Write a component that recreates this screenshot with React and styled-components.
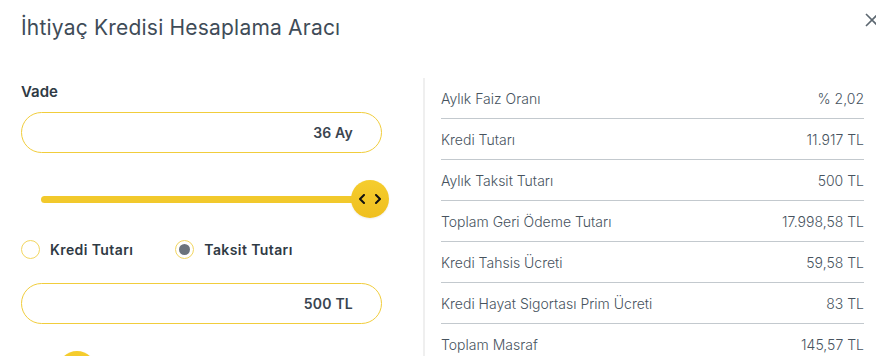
import React, { useState } from 'react';
import styled, { createGlobalStyle } from 'styled-components';

const GlobalStyle = createGlobalStyle`
  body {
    margin: 0;
    background: #fff;
    font-family: Inter, "Open Sans", "Liberation Sans", sans-serif;
  }
`;

const Modal = styled.div`
  width: 876px;
  height: 356px;
  overflow: hidden;
  background: #fff;
`;

const Header = styled.header`
  display: flex;
  justify-content: space-between;
  align-items: flex-start;
  height: 78px;
  padding: 14px 0 0 21px;
  box-sizing: border-box;
`;

const Title = styled.h1`
  margin: 0;
  font-size: 21px;
  font-weight: 400;
  letter-spacing: 0.2px;
  line-height: 28px;
  color: #3f4c58;
`;

const Close = styled.button`
  background: none;
  border: 0;
  padding: 0;
  margin: -2px -4px 0 0;
  width: 16px;
  height: 16px;
  color: #5c6770;
  cursor: pointer;
`;

const Body = styled.div`
  display: grid;
  grid-template-columns: 361px 1fr;
  column-gap: 41px;
  padding: 0 12px 0 21px;
`;

const Form = styled.div`
  display: flex;
  flex-direction: column;
  padding-top: 4px;
`;

const Label = styled.div`
  font-size: 15px;
  font-weight: 600;
  line-height: 20px;
  color: #2f3a44;
  margin-bottom: 10px;
`;

const Field = styled.input`
  height: 41px;
  box-sizing: border-box;
  border: 1px solid #f1cd3c;
  border-radius: 21px;
  padding: 0 28px 0 20px;
  text-align: right;
  font: inherit;
  font-size: 14px;
  font-weight: 600;
  letter-spacing: 0.2px;
  color: #3a4550;
  outline: none;
  background: #fff;
`;

const Slider = styled.div`
  position: relative;
  margin: ${(p) => p.$top}px 12px 0 20px;
  height: 38px;
  display: flex;
  align-items: center;
`;

const Track = styled.div`
  width: 100%;
  height: 7px;
  border-radius: 4px;
  background: #e6e8ea;
  overflow: hidden;
`;

const Fill = styled.div`
  height: 100%;
  background: #f2c92c;
`;

const Thumb = styled.div`
  position: absolute;
  top: 0;
  width: 38px;
  height: 38px;
  margin-left: -19px;
  border-radius: 50%;
  background: linear-gradient(#f5cd2e, #efbf1f);
  display: flex;
  align-items: center;
  justify-content: center;
  box-shadow: 0 1px 2px rgba(0, 0, 0, 0.08);
`;

const RadioGroup = styled.div`
  display: flex;
  gap: 42px;
  margin: 22px 0 24px;
`;

const RadioOption = styled.label`
  display: flex;
  align-items: center;
  gap: 10px;
  font-size: 14px;
  font-weight: 600;
  letter-spacing: 0.4px;
  color: #2f3a44;
  cursor: pointer;
`;

const RadioMark = styled.span`
  width: 19px;
  height: 19px;
  box-sizing: border-box;
  border-radius: 50%;
  border: 1px solid #f2d660;
  display: flex;
  align-items: center;
  justify-content: center;

  &::after {
    content: '';
    width: 11px;
    height: 11px;
    border-radius: 50%;
    background: ${(p) => (p.$checked ? '#6b737c' : 'transparent')};
  }
`;

const Summary = styled.div`
  border-left: 2px solid #efefef;
  padding-left: 16px;
  min-height: 278px;
`;

const Row = styled.div`
  display: flex;
  justify-content: space-between;
  align-items: center;
  height: 41px;
  box-sizing: border-box;
  border-bottom: 1px solid #c3c9ce;
  font-size: 14px;
  font-weight: 300;
  color: #47535e;

  &:last-child {
    border-bottom: 0;
  }
`;

function RangeSlider({ value, top }) {
  return (
    <Slider $top={top}>
      <Track>
        <Fill style={{ width: `${value}%` }} />
      </Track>
      <Thumb style={{ left: `${value}%` }}>
        <svg width="22" height="10" viewBox="0 0 22 10" fill="none" stroke="#111" strokeWidth="2" strokeLinecap="round" strokeLinejoin="round">
          <path d="M5 1 L1 5 L5 9" />
          <path d="M17 1 L21 5 L17 9" />
        </svg>
      </Thumb>
    </Slider>
  );
}

const rows = [
  ['Aylık Faiz Oranı', '% 2,02'],
  ['Kredi Tutarı', '11.917 TL'],
  ['Aylık Taksit Tutarı', '500 TL'],
  ['Toplam Geri Ödeme Tutarı', '17.998,58 TL'],
  ['Kredi Tahsis Ücreti', '59,58 TL'],
  ['Kredi Hayat Sigortası Prim Ücreti', '83 TL'],
  ['Toplam Masraf', '145,57 TL'],
];

export default function App() {
  const [mode, setMode] = useState('taksit');

  return (
    <Modal>
      <GlobalStyle />
      <Header>
        <Title>İhtiyaç Kredisi Hesaplama Aracı</Title>
        <Close aria-label="Kapat">
          <svg width="16" height="16" viewBox="0 0 16 16" stroke="currentColor" strokeWidth="1.6">
            <path d="M2 2 L14 14 M14 2 L2 14" />
          </svg>
        </Close>
      </Header>
      <Body>
        <Form>
          <Label>Vade</Label>
          <Field readOnly value="36 Ay" />
          <RangeSlider value={100} top={27} />
          <RadioGroup>
            <RadioOption onClick={() => setMode('kredi')}>
              <RadioMark $checked={mode === 'kredi'} />
              Kredi Tutarı
            </RadioOption>
            <RadioOption onClick={() => setMode('taksit')}>
              <RadioMark $checked={mode === 'taksit'} />
              Taksit Tutarı
            </RadioOption>
          </RadioGroup>
          <Field readOnly value="500 TL" />
          <RangeSlider value={11} top={27} />
        </Form>
        <Summary>
          {rows.map(([label, value]) => (
            <Row key={label}>
              <span>{label}</span>
              <span>{value}</span>
            </Row>
          ))}
        </Summary>
      </Body>
    </Modal>
  );
}
